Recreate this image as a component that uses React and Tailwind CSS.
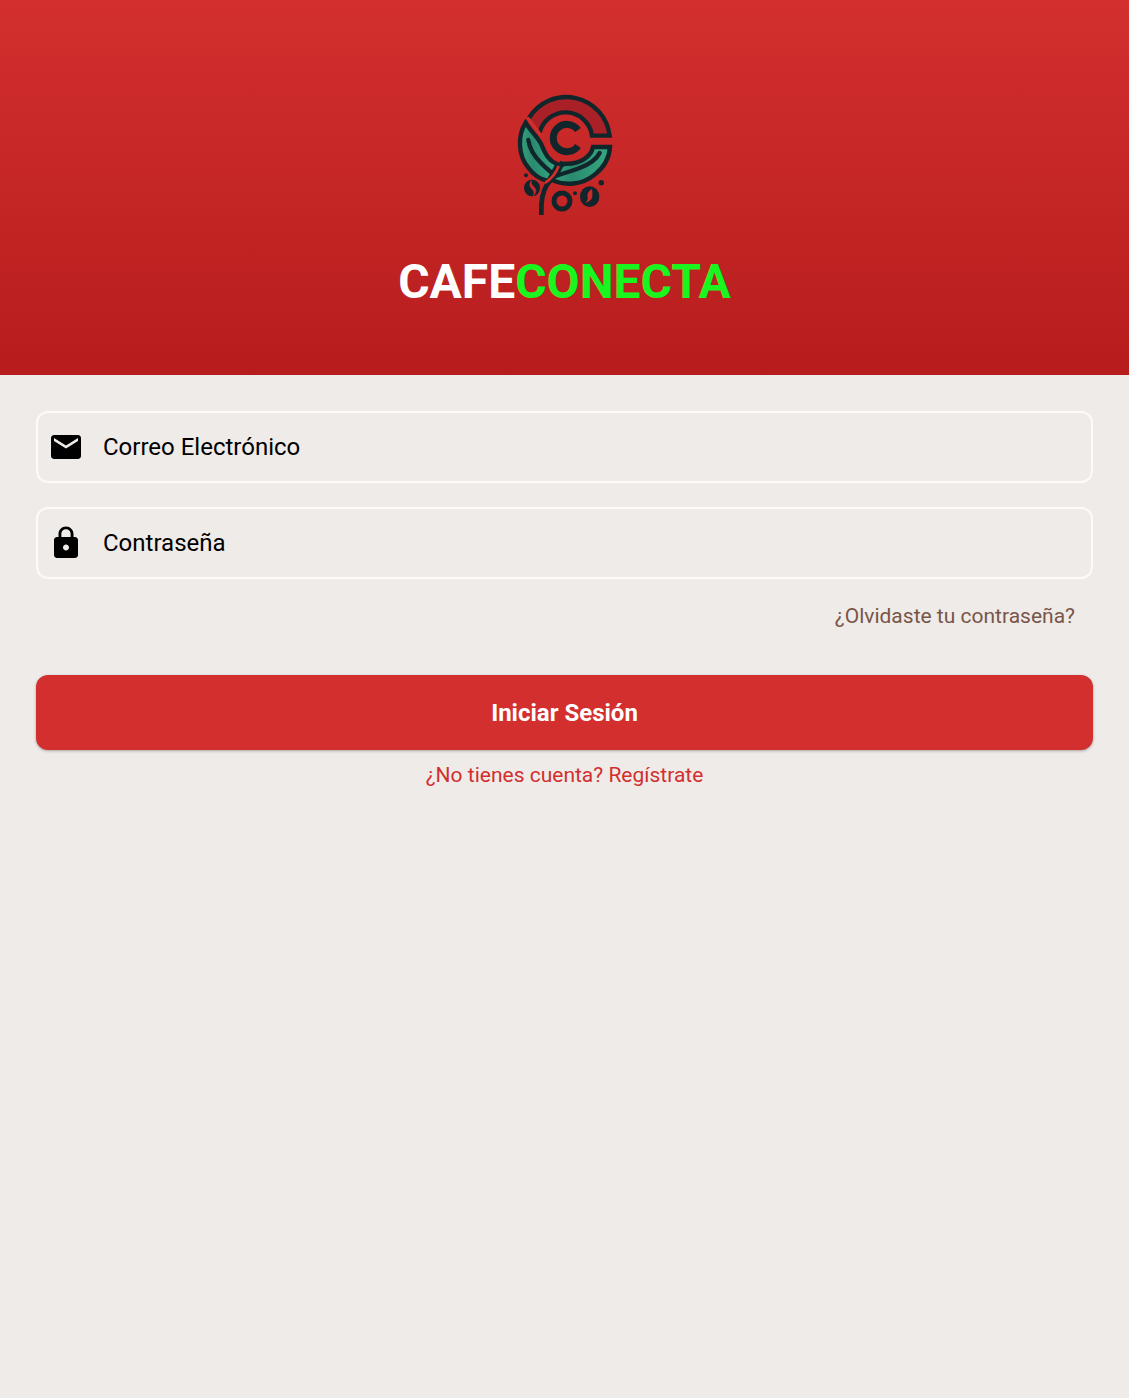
import React from "react";
import { MdEmail, MdLock } from "react-icons/md";

function Logo() {
  return (
    <svg
      viewBox="0 0 360 420"
      className="h-[140px] w-[120px]"
      fill="none"
      stroke="#10262b"
      strokeWidth="13"
      role="img"
      aria-label="CafeConecta"
    >
      <defs>
        <linearGradient id="leaf" x1="0" y1="0" x2="1" y2="0">
          <stop offset="0" stopColor="#36a07c" />
          <stop offset="0.35" stopColor="#2a8a6f" />
          <stop offset="1" stopColor="#36a982" />
        </linearGradient>
      </defs>
      {/* upper band */}
      <path
        d="M73 98 A131 131 0 0 1 314 152 L261 152 A80 80 0 0 0 104 141 Z"
        fill="#a92126"
        stroke="none"
      />
      <path d="M72 99 A131 131 0 0 1 314 152 L261 152 A80 80 0 0 0 104 143" />
      {/* left leaf */}
      <path
        d="M62 113 C38 150 38 210 70 248 C86 270 108 284 130 288 L158 238 C132 228 122 210 108 176 C94 150 76 138 62 113 Z"
        fill="url(#leaf)"
      />
      <path
        d="M70 165 C74 194 92 218 108 234 C122 249 134 258 146 268"
        strokeWidth="13"
        strokeLinecap="round"
      />
      {/* right leaf */}
      <path
        d="M315 186 L264 186 C258 216 224 238 181 236 L164 243 L140 284 C180 304 232 300 270 268 C298 246 313 218 315 186 Z"
        fill="url(#leaf)"
      />
      <path
        d="M284 204 C272 228 248 240 222 250 C196 260 182 262 150 274"
        strokeWidth="13"
        strokeLinecap="round"
      />
      {/* stem */}
      <path
        d="M170 236 C160 272 138 280 125 301 C111 322 108 346 109 383"
        strokeWidth="14"
        strokeLinecap="square"
      />
      <path d="M161 243 C154 262 138 282 120 294" stroke="#d32f2d" strokeWidth="8" />
      <path d="M68 98 L108 150" stroke="#d32f2d" strokeWidth="8" />
      {/* central letter mark */}
      <path d="M219 135 A41 41 0 1 0 219 183" strokeWidth="21" />
      {/* coffee beans and berries */}
      <g fill="#10262b" stroke="none">
        <ellipse cx="81" cy="309" rx="24" ry="25" />
        <ellipse cx="254" cy="335" rx="29" ry="31" />
        <circle cx="63" cy="271" r="6" />
        <circle cx="289" cy="293" r="8" />
        <circle cx="210" cy="325" r="6" />
      </g>
      <circle cx="171" cy="348" r="24" strokeWidth="15" />
      <path
        d="M79 287 C71 298 75 306 82 313 C88 319 89 326 85 332 C95 322 94 314 87 306 C80 299 77 294 79 287 Z"
        fill="#c92a2a"
        stroke="#c92a2a"
        strokeWidth="2"
      />
      <path
        d="M260 312 C249 320 246 329 248 336 C249 344 246 348 241 353 C256 350 263 341 262 330 C262 322 263 318 260 312 Z"
        fill="#c92a2a"
        stroke="none"
      />
    </svg>
  );
}

function Field({ id, label, type, Icon }) {
  return (
    <div className="flex h-[72px] items-center rounded-xl border-2 border-white/80 pl-[10px] focus-within:border-white">
      <Icon className="size-9 shrink-0 text-black" aria-hidden="true" />
      <input
        id={id}
        type={type}
        aria-label={label}
        placeholder={label}
        className="h-full min-w-0 flex-1 bg-transparent px-[19px] text-2xl text-black outline-none placeholder:text-black"
      />
    </div>
  );
}

export default function App() {
  return (
    <div className="min-h-screen bg-[#efebe8] font-['Roboto',sans-serif]">
      <header className="flex flex-col items-center gap-7 bg-linear-to-b from-[#d32f2f] to-[#b71c1c] pt-[85px] pb-16">
        <Logo />
        <h1 className="text-5xl leading-[58px] font-bold text-white">
          CAFE<span className="text-[#1bf51f]">CONECTA</span>
        </h1>
      </header>
      <form
        className="flex flex-col px-9 pt-9"
        onSubmit={(event) => event.preventDefault()}
      >
        <div className="flex flex-col gap-6">
          <Field id="email" label="Correo Electrónico" type="email" Icon={MdEmail} />
          <Field id="password" label="Contraseña" type="password" Icon={MdLock} />
        </div>
        <a
          href="#recuperar"
          className="mt-6 self-end pr-[18px] text-[21px] leading-[26px] text-[#795548]"
        >
          ¿Olvidaste tu contraseña?
        </a>
        <button
          type="submit"
          className="mt-[46px] h-[75px] rounded-xl bg-[#d32f2f] text-2xl font-bold text-white shadow-[0_1px_3px_rgba(0,0,0,0.3)]"
        >
          Iniciar Sesión
        </button>
        <a
          href="#registro"
          className="mt-3 self-center text-[21px] leading-[26px] text-[#d32f2f]"
        >
          ¿No tienes cuenta? Regístrate
        </a>
      </form>
    </div>
  );
}
